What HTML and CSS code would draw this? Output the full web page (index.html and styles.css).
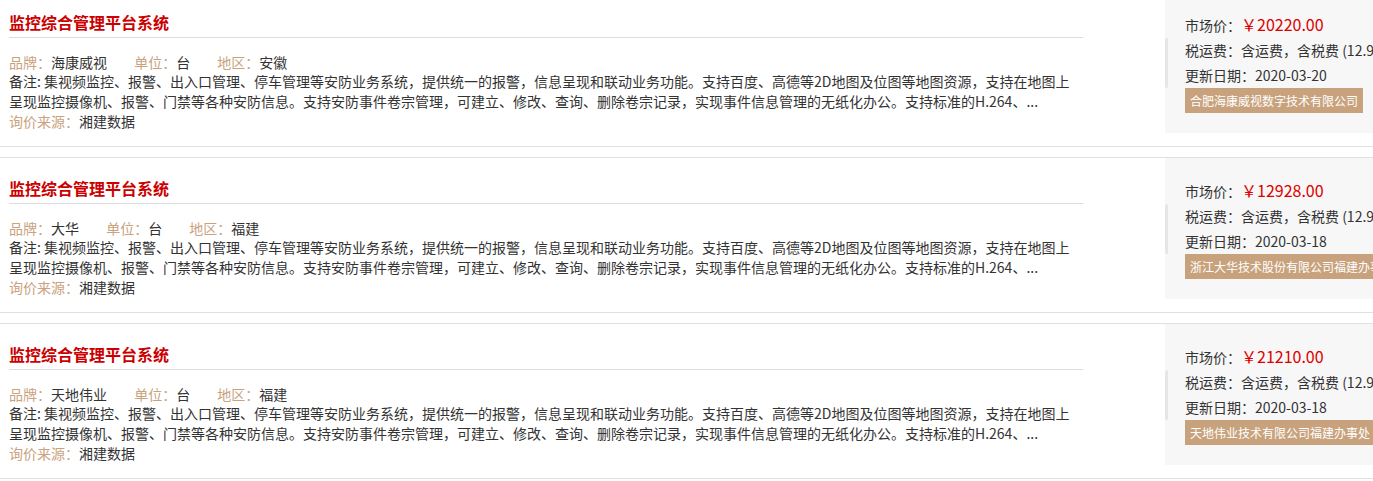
FILE: index.html
```html
<!DOCTYPE html>
<html lang="zh-CN">
<head>
  <meta charset="UTF-8">
  <title>询价列表</title>
  <link rel="stylesheet" href="styles.css">
</head>
<body>
  <div class="list">
    <div class="item">
      <div class="info">
        <h3 class="title">监控综合管理平台系统</h3>
        <div class="meta">
          <span><em>品牌：</em>海康威视</span>
          <span><em>单位：</em>台</span>
          <span><em>地区：</em>安徽</span>
        </div>
        <p class="remark">备注: 集视频监控、报警、出入口管理、停车管理等安防业务系统，提供统一的报警，信息呈现和联动业务功能。支持百度、高德等2D地图及位图等地图资源，支持在地图上呈现监控摄像机、报警、门禁等各种安防信息。支持安防事件卷宗管理，可建立、修改、查询、删除卷宗记录，实现事件信息管理的无纸化办公。支持标准的H.264、...</p>
        <div class="source"><em>询价来源：</em>湘建数据</div>
      </div>
      <div class="side">
        <div class="scroll"></div>
        <div class="line">市场价：<span class="price">￥20220.00</span></div>
        <div class="line">税运费：含运费，含税费 (12.9%)</div>
        <div class="line">更新日期：2020-03-20</div>
        <div class="company">合肥海康威视数字技术有限公司</div>
      </div>
    </div>

    <div class="item">
      <div class="info">
        <h3 class="title">监控综合管理平台系统</h3>
        <div class="meta">
          <span><em>品牌：</em>大华</span>
          <span><em>单位：</em>台</span>
          <span><em>地区：</em>福建</span>
        </div>
        <p class="remark">备注: 集视频监控、报警、出入口管理、停车管理等安防业务系统，提供统一的报警，信息呈现和联动业务功能。支持百度、高德等2D地图及位图等地图资源，支持在地图上呈现监控摄像机、报警、门禁等各种安防信息。支持安防事件卷宗管理，可建立、修改、查询、删除卷宗记录，实现事件信息管理的无纸化办公。支持标准的H.264、...</p>
        <div class="source"><em>询价来源：</em>湘建数据</div>
      </div>
      <div class="side">
        <div class="scroll"></div>
        <div class="line">市场价：<span class="price">￥12928.00</span></div>
        <div class="line">税运费：含运费，含税费 (12.9%)</div>
        <div class="line">更新日期：2020-03-18</div>
        <div class="company">浙江大华技术股份有限公司福建办事处</div>
      </div>
    </div>

    <div class="item">
      <div class="info">
        <h3 class="title">监控综合管理平台系统</h3>
        <div class="meta">
          <span><em>品牌：</em>天地伟业</span>
          <span><em>单位：</em>台</span>
          <span><em>地区：</em>福建</span>
        </div>
        <p class="remark">备注: 集视频监控、报警、出入口管理、停车管理等安防业务系统，提供统一的报警，信息呈现和联动业务功能。支持百度、高德等2D地图及位图等地图资源，支持在地图上呈现监控摄像机、报警、门禁等各种安防信息。支持安防事件卷宗管理，可建立、修改、查询、删除卷宗记录，实现事件信息管理的无纸化办公。支持标准的H.264、...</p>
        <div class="source"><em>询价来源：</em>湘建数据</div>
      </div>
      <div class="side">
        <div class="scroll"></div>
        <div class="line">市场价：<span class="price">￥21210.00</span></div>
        <div class="line">税运费：含运费，含税费 (12.9%)</div>
        <div class="line">更新日期：2020-03-18</div>
        <div class="company">天地伟业技术有限公司福建办事处</div>
      </div>
    </div>
  </div>
</body>
</html>
```

FILE: styles.css
```css
body {
  margin: 0;
  font-family: "Noto Sans CJK SC", "Noto Sans", sans-serif;
  color: #333;
  background: #fff;
  overflow: hidden;
}

.list {
  margin-top: -9px;
  width: 1500px;
}

.item {
  display: flex;
  border-top: 1px solid #e0e0e0;
  border-bottom: 1px solid #e0e0e0;
  margin-bottom: 10px;
  height: 154px;
}

.info {
  flex: none;
  width: 1074px;
  padding-left: 9px;
  margin-right: 82px;
}

.title {
  margin: 0;
  padding-top: 15px;
  font-size: 16px;
  font-weight: bold;
  line-height: 30px;
  color: #cc0000;
  border-bottom: 1px solid #ddd;
}

.meta {
  margin-top: 15px;
  font-size: 14px;
  line-height: 18px;
}

.meta span {
  margin-right: 24px;
}

em {
  font-style: normal;
  color: #c9a27e;
}

.remark {
  margin: 0;
  font-size: 14px;
  line-height: 20px;
}

.source {
  font-size: 14px;
  line-height: 20px;
}

.side {
  flex: none;
  position: relative;
  width: 230px;
  height: 100px;
  padding: 21px 20px 20px;
  background: #f7f7f7;
  font-size: 14px;
  white-space: nowrap;
}

.line {
  height: 25px;
  line-height: 25px;
}

.scroll {
  position: absolute;
  left: 0;
  top: 46px;
  width: 3px;
  height: 50px;
  background: #e6e6e6;
  border-radius: 2px;
}

.price {
  font-size: 16px;
  line-height: 20px;
  color: #dd0000;
}

.company {
  width: max-content;
  padding: 0 5px;
  font-size: 12px;
  line-height: 25px;
  color: #fff;
  background: #c8a27c;
}
```
